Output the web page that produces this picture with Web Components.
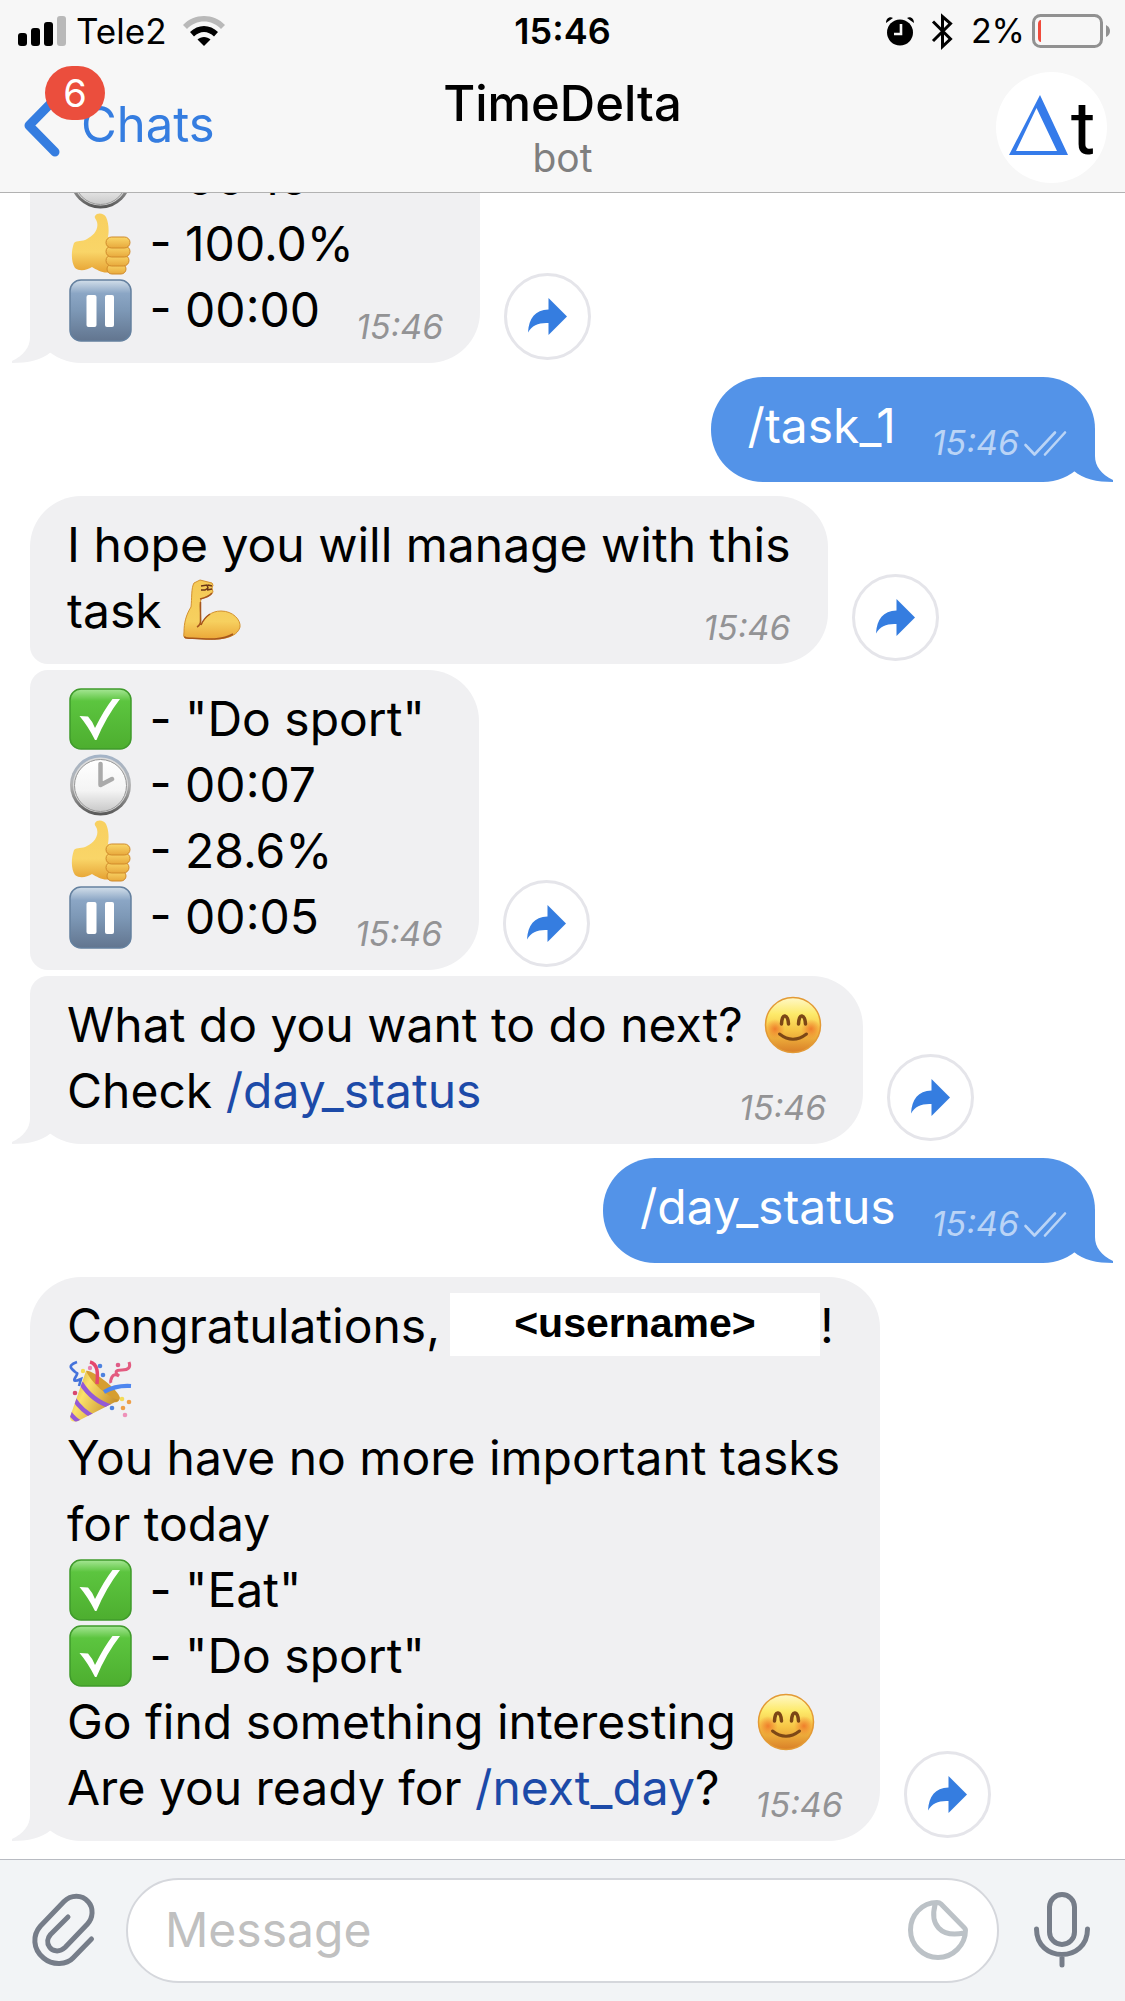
<!DOCTYPE html>
<html lang="en">
<head>
<meta charset="utf-8">
<meta name="viewport" content="width=device-width, initial-scale=1">
<title>TimeDelta</title>
<style>
html, body { margin: 0; height: 100%; }
body { font-family: Inter, "Liberation Sans", sans-serif; color: #000; background: #fff; }
a { color: #1c4aa8; text-decoration: none; }
.line { display: block; min-height: 66px; white-space: nowrap; }
.named { display: flex; align-items: flex-start; }
.mask { box-sizing: border-box; width: 370px; height: 63px; margin-left: 10px; background: #fff; font: bold 41px/60px "Liberation Sans", sans-serif; text-align: center; }
</style>
</head>
<body>
<chat-app>
  <status-bar slot="top" carrier="Tele2" time="15:46" battery="2%"></status-bar>
  <nav-bar slot="top" heading="TimeDelta" subtitle="bot" back="Chats" unread="6"></nav-bar>

  <chat-message tail forward time="15:46">
    <span class="line"><tg-emoji name="check"></tg-emoji> - "Eat"</span>
    <span class="line"><tg-emoji name="clock"></tg-emoji> - 00:10</span>
    <span class="line"><tg-emoji name="thumb"></tg-emoji> - 100.0%</span>
    <span slot="last"><tg-emoji name="pause"></tg-emoji> - 00:00</span>
  </chat-message>

  <chat-message out tail time="15:46"><span slot="last">/task_1</span></chat-message>

  <chat-message first forward time="15:46">
    <span class="line">I hope you will manage with this</span>
    <span slot="last">task <tg-emoji name="arm"></tg-emoji></span>
  </chat-message>

  <chat-message forward time="15:46">
    <span class="line"><tg-emoji name="check"></tg-emoji> - "Do sport"</span>
    <span class="line"><tg-emoji name="clock"></tg-emoji> - 00:07</span>
    <span class="line"><tg-emoji name="thumb"></tg-emoji> - 28.6%</span>
    <span slot="last"><tg-emoji name="pause"></tg-emoji> - 00:05</span>
  </chat-message>

  <chat-message tail forward time="15:46">
    <span class="line">What do you want to do next? <tg-emoji name="smile"></tg-emoji></span>
    <span slot="last">Check <a href="#day_status">/day_status</a></span>
  </chat-message>

  <chat-message out tail time="15:46"><span slot="last">/day_status</span></chat-message>

  <chat-message first tail forward time="15:46">
    <span class="line named">Congratulations,<span class="mask">&lt;username&gt;</span>!</span>
    <span class="line"><tg-emoji name="party"></tg-emoji></span>
    <span class="line">You have no more important tasks</span>
    <span class="line">for today</span>
    <span class="line"><tg-emoji name="check"></tg-emoji> - "Eat"</span>
    <span class="line"><tg-emoji name="check"></tg-emoji> - "Do sport"</span>
    <span class="line">Go find something interesting <tg-emoji name="smile"></tg-emoji></span>
    <span slot="last">Are you ready for <a href="#next_day">/next_day</a>?</span>
  </chat-message>

  <message-composer slot="bottom"></message-composer>
</chat-app>

<script>
const base = ':host,*{box-sizing:border-box}svg{display:block;overflow:visible}button{flex:none;border:0;padding:0;margin:0;background:none;font:inherit;color:inherit;cursor:pointer}a{text-decoration:none}';

class BaseElement extends HTMLElement {
  connectedCallback() {
    if (this.shadowRoot) return;
    this.attachShadow({ mode: 'open' }).innerHTML = '<style>' + base + this.css() + '</style>' + this.html();
  }
  css() { return ''; }
  html() { return '<slot></slot>'; }
}

customElements.define('chat-app', class extends BaseElement {
  css() { return `
    :host{display:flex;flex-direction:column;height:100vh;overflow:hidden}
    header{flex:none;height:193px;background:#f7f7f7;border-bottom:1px solid #b2b2b2}
    main{flex:1;min-height:0;overflow:hidden;display:flex;flex-direction:column;justify-content:flex-end;padding-bottom:18px}`; }
  html() { return '<header><slot name="top"></slot></header><main><slot></slot></main><slot name="bottom"></slot>'; }
});

customElements.define('status-bar', class extends BaseElement {
  css() { return `
    :host{display:grid;grid-template-columns:1fr auto 1fr;align-items:center;height:62px;padding:0 15px;font-size:35px;line-height:42px}
    .left,.right{display:flex;align-items:center}
    .left{padding-left:3px}
    .right{justify-content:flex-end;font-size:34px}
    .carrier{margin:0 16px 0 10px}
    .time{font-size:36px;font-weight:600}
    .bt{margin:0 18px 0 18px}
    .batt{margin-left:7px}`; }
  html() { return `
    <div class="left">
      <svg width="48" height="30" viewBox="0 0 48 30"><rect y="17" width="9" height="13" rx="3"/><rect x="13" y="12" width="9" height="18" rx="3"/><rect x="26" y="6" width="9" height="24" rx="3"/><rect x="39" width="9" height="30" rx="3" fill="#b9b9b9"/></svg>
      <span class="carrier">${this.getAttribute('carrier')}</span>
      <svg width="42" height="30" viewBox="0 0 42 30"><path d="M0 9C11-3 31-3 42 9L38 13C29 3 13 3 4 13Z" fill="#b9b9b9"/><path d="M7 16C15 8 27 8 35 16L31 20.500C25 14.500 17 14.500 11 20.500Z"/><path d="M14.500 23.500C18 20 24 20 27.500 23.500L21 30Z"/></svg>
    </div>
    <time class="time">${this.getAttribute('time')}</time>
    <div class="right">
      <svg width="28" height="29" viewBox="0 0 28 29"><circle cx="14" cy="15.500" r="13"/><path d="M0 6C0 1 4-1 7 1ZM28 6C28 1 24-1 21 1Z"/><path d="M15 7V17H8" fill="none" stroke="#f7f7f7" stroke-width="2.600"/></svg>
      <svg class="bt" width="21" height="37" viewBox="0 0 21 37"><path d="M1 8.500L18.500 26L10.500 33.500V3.500L18.500 10.500L1 28" fill="none" stroke="#000" stroke-width="3"/></svg>
      <span>${this.getAttribute('battery')}</span>
      <svg class="batt" width="78" height="34" viewBox="0 0 78 34"><rect x="1.500" y="1.500" width="68" height="31" rx="7" fill="none" stroke="#919191" stroke-width="3"/><path d="M9 6V28C7 28 6 26 6 24V10C6 8 7 6 9 6Z" fill="#f04b3c"/><path d="M74 11Q78 13 78 17T74 23Z" fill="#919191"/></svg>
    </div>`; }
});

customElements.define('nav-bar', class extends BaseElement {
  css() { return `
    :host{display:grid;grid-template-columns:1fr auto 1fr;height:130px;padding:0 18px}
    .back{display:flex;align-items:center;align-self:start;position:relative;justify-self:start;height:126px;padding-left:6px;color:#357de0;font-size:49px;line-height:60px}
    .back svg{margin-right:21px}
    .badge{position:absolute;left:27px;top:4px;width:60px;height:54px;border-radius:27px;background:#eb4e3d;color:#fff;font-size:38px;line-height:54px;text-align:center}
    .mid{text-align:center}
    h1{margin:12px 0 0;font-size:49px;line-height:60px;font-weight:500}
    p{margin:0;font-size:39px;line-height:48px;color:#7f7f7f}
    .avatar{justify-self:end;width:111px;height:111px;margin-top:10px}
    text{font-family:Roboto,sans-serif;font-size:75px}`; }
  html() { return `
    <a class="back" href="#chats"><svg width="36" height="63" viewBox="0 0 36 63"><path d="M31 5L5 31.500L31 58" fill="none" stroke="#357de0" stroke-width="9" stroke-linecap="round" stroke-linejoin="round"/></svg>${this.getAttribute('back')}<span class="badge">${this.getAttribute('unread')}</span></a>
    <div class="mid"><h1>${this.getAttribute('heading')}</h1><p>${this.getAttribute('subtitle')}</p></div>
    <svg class="avatar" viewBox="0 0 111 111"><circle cx="55.500" cy="55.500" r="55.500" fill="#fff"/><path d="M13 83L44 23L72 83ZM20 79H61L40.500 36Z" fill="#357bea" fill-rule="evenodd"/><text x="75" y="82">t</text></svg>`; }
});

/* Each drawing: the width it takes in the line, its left inset, its shapes. */
const art = {
  check: [69, 1, `<defs><linearGradient id="g" x2="0" y2="1"><stop offset="0" stop-color="#a6e695"/><stop offset=".2" stop-color="#5cc53f"/><stop offset="1" stop-color="#4dae2f"/></linearGradient></defs><rect x="2" y="1" width="61" height="60" rx="11" fill="url(#g)" stroke="#3f9a2b" stroke-width="1.500"/><path d="M11.500 28L20 28.500Q25 34 27 40Q36 22 44.500 11H52Q38 29 28.500 52H27Q20 38 11.500 28Z" fill="#fff"/>`],
  pause: [69, 1, `<defs><linearGradient id="g" x2="0" y2="1"><stop offset="0" stop-color="#d3dfea"/><stop offset=".22" stop-color="#8ba6c5"/><stop offset=".5" stop-color="#7d98b6"/><stop offset="1" stop-color="#62758f"/></linearGradient></defs><rect x="2" y="1" width="61" height="61" rx="11" fill="url(#g)" stroke="#64809f" stroke-width="1.500"/><rect x="18.500" y="16" width="10" height="32" rx="2" fill="#fff"/><rect x="37" y="16" width="9" height="32" rx="2" fill="#fff"/>`],
  clock: [69, 1, `<defs><linearGradient id="g" x2="0" y2="1"><stop offset="0" stop-color="#a4b4c8"/><stop offset=".5" stop-color="#b4b4b4"/><stop offset="1" stop-color="#555"/></linearGradient><linearGradient id="h" x2="0" y2="1"><stop offset="0" stop-color="#fff"/><stop offset=".6" stop-color="#f4f4f4"/><stop offset="1" stop-color="#c9c9c9"/></linearGradient></defs><circle cx="32.500" cy="31" r="30.500" fill="url(#g)"/><circle cx="32.500" cy="31" r="27.500" fill="#dcdcdc"/><circle cx="32.500" cy="31.500" r="26" fill="url(#h)" stroke="#979797" stroke-width="1"/><path d="M32.500 10V31L44 25" fill="none" stroke="#aaa" stroke-width="4.500" stroke-linecap="round" stroke-linejoin="round"/>`],
  thumb: [69, 1, `<defs><linearGradient id="g" x2="0" y2="1"><stop offset="0" stop-color="#f8d060"/><stop offset=".65" stop-color="#f9d568"/><stop offset="1" stop-color="#e6a233"/></linearGradient><linearGradient id="h" x2="0" y2="1"><stop offset="0" stop-color="#fad768"/><stop offset="1" stop-color="#e8a93d"/></linearGradient></defs><path d="M27 3C29-1 36 0 38 4C41 10 41 19 40 24L44 28L42 59C36 61 29 57 24 54C19 57 12 59 7 55C3 49 3 38 6 30C9 27 14 29 19 26C25 23 31 17 29 9C28 6 26 5 27 3Z" fill="url(#g)"/><g fill="url(#h)" stroke="#d08a2b" stroke-width="1"><rect x="39" y="51" width="19" height="10" rx="5"/><rect x="38" y="42" width="23" height="11" rx="5.500"/><rect x="38" y="33" width="24" height="11" rx="5.500"/><rect x="38" y="24" width="24" height="11" rx="5.500"/></g>`],
  arm: [68, 4, `<defs><linearGradient id="g" x2="0" y2="1"><stop offset="0" stop-color="#f5c955"/><stop offset=".7" stop-color="#f6d05f"/><stop offset="1" stop-color="#eba637"/></linearGradient></defs><path d="M15 3L21 0L33 3Q35 5 33 8L34 12Q33 15 22 19Q20 25 21.500 33L22 45C26 37 32 31 42 31C54 31 62 40 61 47C58 58 42 60 25 59L6 58Q4 57 5 52C5 43 7 35 12 27C13 19 12 8 15 3Z" fill="url(#g)" stroke="#d3912f" stroke-width="1"/><path d="M5.500 56.500Q6 58 8 58C25 59 43 61 54 54M21.500 22V41Q21.500 45 18 47M22 45C24 40 28 36 31 34M21 19Q30 17 33 13" fill="none" stroke="#a6561d" stroke-width="1.500"/><path d="M22 6L28 5L29 8L26 10L22 10M29 5L33 6M28 10L33 9" fill="none" stroke="#6b3517" stroke-width="1.500"/>`],
  smile: [70, 5, `<defs><linearGradient id="g" x2="0" y2="1"><stop offset="0" stop-color="#fff8c8"/><stop offset=".3" stop-color="#fdea6a"/><stop offset=".6" stop-color="#f6c344"/><stop offset="1" stop-color="#d97f28"/></linearGradient><radialGradient id="h"><stop offset="0" stop-color="#ee7629" stop-opacity=".9"/><stop offset="1" stop-color="#f07c2c" stop-opacity="0"/></radialGradient></defs><circle cx="32" cy="31" r="27.500" fill="url(#g)" stroke="#e39a35" stroke-width="1.500"/><circle cx="14" cy="35" r="10" fill="url(#h)"/><circle cx="50" cy="35" r="10" fill="url(#h)"/><path d="M20.500 30Q21 21.500 24 22T27.500 30M37.500 30Q38 21.500 41 22T44.500 30" fill="none" stroke="#7c4716" stroke-width="3.500" stroke-linecap="round"/><path d="M18.500 40Q32 50.500 45.500 40" fill="none" stroke="#7c4716" stroke-width="3" stroke-linecap="round"/>`],
  party: [69, 1, `<defs><linearGradient id="g" x2="1" y2=".5"><stop offset="0" stop-color="#c9962f"/><stop offset=".4" stop-color="#fbe26a"/><stop offset="1" stop-color="#c78f2d"/></linearGradient><clipPath id="c"><path d="M18 10C24 22 39 36 51 39L10 60Q2 62 2 56Z"/></clipPath></defs><path d="M18 10C23 8 50 28 52 37Q51 42 46 41C35 38 20 23 18 10Z" fill="#d69e31"/><path d="M18 10C24 22 39 36 51 39L10 60Q2 62 2 56Z" fill="url(#g)"/><g clip-path="url(#c)" fill="none" stroke="#9459d6" stroke-width="4.500"><path d="M13 22Q24 40 44 46M6 38Q14 50 26 56M1 51Q6 58 13 62"/></g><path d="M22 1C30 3 30 12 29 23" fill="none" stroke="#e5476d" stroke-width="3.500"/><path d="M36 31Q48 24 63 25" fill="none" stroke="#4e86ef" stroke-width="4"/><path d="M9 1Q0 4 4 8T9 12T7 17T13 18L11 25" fill="none" stroke="#4472db" stroke-width="2.600"/><path d="M61 1Q64 9 54 9T51 15Q46 12 44 16T43 22" fill="none" stroke="#e35b80" stroke-width="3"/><g><circle cx="32" cy="5" r="2.300" fill="#4e82e0"/><circle cx="35" cy="14" r="2.300" fill="#4e82e0"/><circle cx="15" cy="10" r="2.200" fill="#f5dc50"/><circle cx="22" cy="7" r="2.200" fill="#e982b0"/><circle cx="50" cy="4" r="2.300" fill="#df5c88"/><circle cx="7" cy="32" r="2.300" fill="#d8476f"/><circle cx="44" cy="47" r="2.300" fill="#4e82e0"/><circle cx="54" cy="38" r="2.300" fill="#f4dc58"/><circle cx="61" cy="41" r="2.300" fill="#ee9f48"/><circle cx="55" cy="47" r="2.300" fill="#ee9f48"/><circle cx="57" cy="54" r="2.300" fill="#ee91b9"/></g>`]
};

customElements.define('tg-emoji', class extends BaseElement {
  css() { return ':host{display:inline-block;height:62px;vertical-align:-14px}'; }
  html() {
    const [w, inset, body] = art[this.getAttribute('name')];
    return `<svg width="${w}" height="62" viewBox="${-inset} 0 ${w} 62" role="img" aria-label="${this.getAttribute('name')}">${body}</svg>`;
  }
});

customElements.define('chat-message', class extends BaseElement {
  css() { return `
    :host{flex:none;display:flex;align-items:flex-end;gap:24px;margin-top:6px;padding:0 30px;--fill:#f0f0f2;font-size:48px;line-height:66px}
    :host([first]){margin-top:14px}
    :host([out]){justify-content:flex-end;margin-top:14px;--fill:#5393e8;color:#fff}
    .bubble{position:relative;padding:16px 37px 20px;border-radius:18px 51px 51px 18px;background:var(--fill)}
    :host([first]) .bubble{border-top-left-radius:51px}
    :host([tail]) .bubble{border-bottom-left-radius:51px}
    :host([out]) .bubble{padding:16px 29px 23px 37px;border-radius:52px}
    .foot{display:flex;justify-content:space-between;align-items:flex-end;gap:36px;white-space:nowrap}
    .meta{display:flex;align-items:center;gap:5px;height:40px;margin-bottom:-4px;font-size:34px;line-height:40px;font-style:italic;color:#939395}
    :host([out]) .meta{color:#bad4f6}
    .tail{position:absolute;left:-18px;bottom:0;fill:var(--fill)}
    :host([out]) .tail{left:auto;right:-18px;transform:scaleX(-1)}
    button{width:87px;height:87px;margin-bottom:3px;border:3px solid #e5e5ea;border-radius:50%;background:#fff}`; }
  html() {
    const out = this.hasAttribute('out');
    const tail = this.hasAttribute('tail') ? '<svg class="tail" width="40" height="52" viewBox="0 0 40 52"><path d="M18 0V26C18 36 12 44 0 50V52C16 52 30 49 39 41V0Z"/></svg>' : '';
    const checks = out ? '<svg width="42" height="25" viewBox="0 0 42 25"><path d="M1.500 14L10.500 23.500L31 1.500M21 23.500L41 1.500" fill="none" stroke="#bad4f6" stroke-width="2.600" stroke-linecap="round" stroke-linejoin="round"/></svg>' : '';
    const forward = this.hasAttribute('forward') ? '<button aria-label="Forward"><svg width="81" height="81" viewBox="3 3 81 81"><path d="M44.500 25L63 43.500L44.500 62V50C35 49.500 28 52 24 59.500C25 45 31 37 44.500 36.500Z" fill="#357de0"/></svg></button>' : '';
    return `<div class="bubble">${tail}<slot></slot><div class="foot"><slot name="last"></slot><span class="meta"><time>${this.getAttribute('time')}</time>${checks}</span></div></div>${forward}`;
  }
});

customElements.define('message-composer', class extends BaseElement {
  css() { return `
    :host{flex:none;display:flex;align-items:flex-start;height:142px;padding-top:18px;border-top:1px solid #b8bbc2;background:#f2f4f6}
    button{display:grid;place-items:center;width:126px;height:103px}
    label{flex:1;min-width:0;display:flex;align-items:center;height:105px;padding:0 29px 2px 37px;border:2px solid #d5d7dc;border-radius:53px;background:#fff}
    input{flex:1;min-width:0;height:66px;padding:0;border:0;outline:0;background:none;font:48px/66px Inter,"Liberation Sans",sans-serif;color:#000}
    input::placeholder{color:#c0c0c0;opacity:1}
    label button{width:60px;height:60px}
    path,rect{fill:none;stroke:#767d89;stroke-width:5;stroke-linecap:round;stroke-linejoin:round}
    label path{stroke:#bcc2c7}`; }
  html() { return `
    <button aria-label="Attach"><svg width="63" height="72" viewBox="0 0 63 72"><path d="M59.500 45L41 64C35 70.500 21 72 11.500 64C0.500 55 0.500 41 8.500 32L32 7.500C39 0.500 50 0.500 56 7.500C62 14 61 24 55.500 30L33 53.500C27 59 20 57 17.500 53C14.500 49 15.500 44 18.500 40.500L36 23"/></svg></button>
    <label><input type="text" placeholder="Message" aria-label="Message"><button aria-label="Stickers"><svg width="60" height="60" viewBox="0 0 60 60"><path d="M29 2.500C14 2.500 2.500 15 2.500 30S15 57.500 30 57.500S57.500 45 57.500 30Q57.500 29 56.500 28L33 4Q31.500 2.500 29 2.500ZM27 5C22 24 32 38 56 33"/></svg></button></label>
    <button aria-label="Record voice"><svg width="56" height="76" viewBox="0 0 56 76"><rect x="15.500" y="2.500" width="25" height="50" rx="12.500"/><path d="M2.500 37C2.500 71 53.500 71 53.500 37M28 63V73"/></svg></button>`; }
});
</script>
</body>
</html>
